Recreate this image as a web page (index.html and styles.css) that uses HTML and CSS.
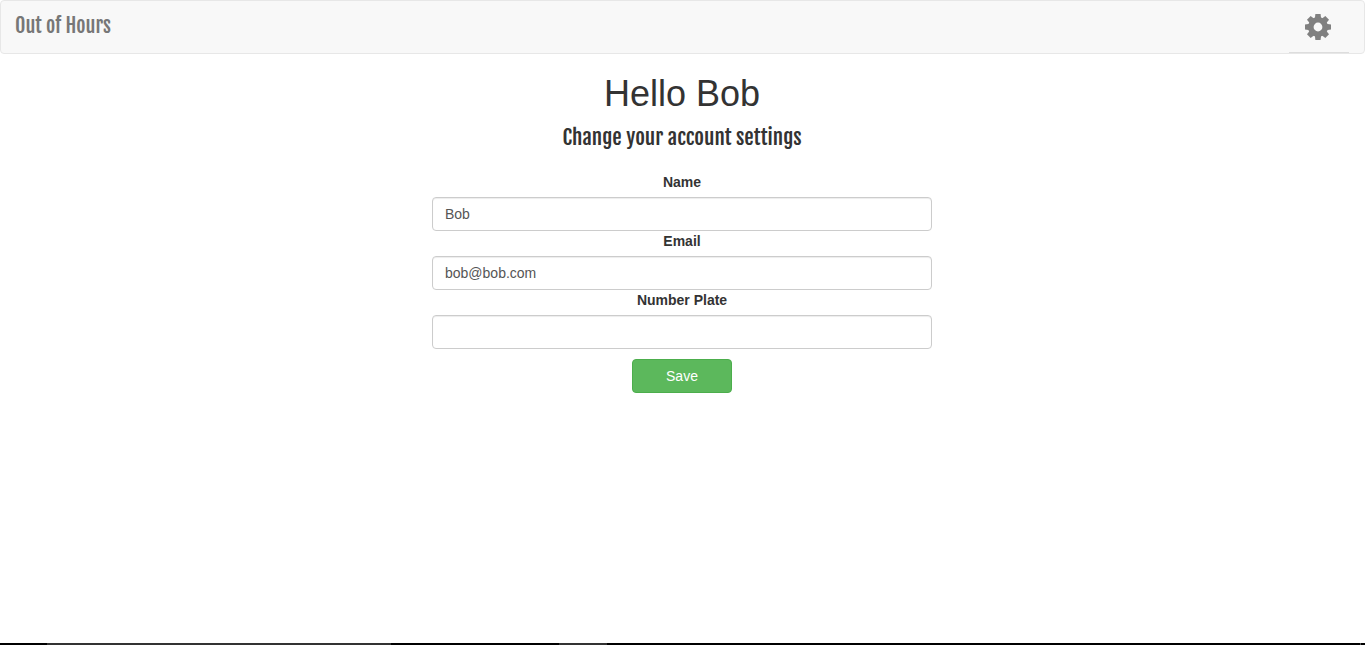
FILE: index.html
```html
<!DOCTYPE html>
<html lang="en">
<head>
<meta charset="utf-8">
<title>Out of Hours</title>
<link rel="stylesheet" href="styles.css">
</head>
<body>
<header class="navbar">
  <a class="brand" href="#">Out of Hours</a>
  <button class="settings" type="button" aria-label="Settings">
    <svg class="cog" viewBox="-13 -13 26 26" aria-hidden="true">
      <defs><path id="tooth" d="M-2.6-13H2.6L3.2-8H-3.2Z"/></defs>
      <g fill="currentColor">
        <path fill-rule="evenodd" d="M0-10A10 10 0 1 1 0 10A10 10 0 1 1 0-10ZM0-4.4A4.4 4.4 0 1 0 0 4.4A4.4 4.4 0 1 0 0-4.4Z"/>
        <use href="#tooth"/>
        <use href="#tooth" transform="rotate(45)"/>
        <use href="#tooth" transform="rotate(90)"/>
        <use href="#tooth" transform="rotate(135)"/>
        <use href="#tooth" transform="rotate(180)"/>
        <use href="#tooth" transform="rotate(225)"/>
        <use href="#tooth" transform="rotate(270)"/>
        <use href="#tooth" transform="rotate(315)"/>
      </g>
    </svg>
  </button>
</header>
<main class="content">
  <h1 class="greeting">Hello Bob</h1>
  <h2 class="subtitle">Change your account settings</h2>
  <form class="account-form">
    <label class="label" for="name">Name</label>
    <input class="field" id="name" type="text" value="Bob">
    <label class="label" for="email">Email</label>
    <input class="field" id="email" type="email" value="bob@bob.com">
    <label class="label" for="plate">Number Plate</label>
    <input class="field" id="plate" type="text">
    <button class="save" type="button">Save</button>
  </form>
</main>
<footer class="taskbar">
  <span class="gap-start"></span>
  <span class="search"></span>
  <span class="gap-middle"></span>
  <span class="active-app"></span>
  <span class="divider"></span>
</footer>
</body>
</html>
```

FILE: styles.css
```css
* {
  box-sizing: border-box;
}

body {
  display: flex;
  flex-direction: column;
  min-height: 100vh;
  margin: 0;
  background: #fff;
  color: #333;
  font: 14px/20px "Liberation Sans", Arial, sans-serif;
}

.navbar {
  display: flex;
  justify-content: space-between;
  padding: 0 15px 0 14px;
  border: 1px solid #e7e7e7;
  border-radius: 4px;
  background: #f8f8f8;
}

.brand {
  padding: 12px 0 14px;
  color: #777;
  font: 20px/26px "Fjalla One", "Liberation Sans Narrow", "Roboto Condensed", "Open Sans Condensed", sans-serif;
  text-decoration: none;
}

.settings {
  width: 60px;
  padding: 0 16px;
  border: 0;
  border-bottom: 1px solid #ddd;
  background: transparent;
  color: #808080;
}

.cog {
  display: block;
  width: 26px;
  height: 26px;
}

.content {
  display: flex;
  flex: 1;
  flex-direction: column;
  align-items: center;
  padding: 20px 16px 20px 15px;
  text-align: center;
}

.greeting {
  margin: 0 0 10px;
  font-size: 36px;
  font-weight: 500;
  line-height: 40px;
}

.subtitle {
  margin: 0 0 22px;
  font: 21px/26px "Fjalla One", "Liberation Sans Narrow", "Roboto Condensed", "Open Sans Condensed", sans-serif;
}

.account-form {
  display: flex;
  flex-direction: column;
  align-items: center;
  width: 100%;
  max-width: 500px;
}

.label {
  margin-bottom: 5px;
  font-weight: 700;
}

.field {
  width: 100%;
  height: 34px;
  padding: 6px 12px;
  border: 1px solid #ccc;
  border-radius: 4px;
  background: #fff;
  box-shadow: inset 0 1px 1px rgba(0, 0, 0, 0.075);
  color: #555;
  font: inherit;
}

.save {
  width: 100px;
  margin-top: 10px;
  padding: 6px 12px;
  border: 1px solid #4cae4c;
  border-radius: 4px;
  background: #5cb85c;
  color: #fff;
  font: inherit;
}

.taskbar {
  display: flex;
  height: 2px;
  background: #000;
}

.gap-start {
  width: 47px;
}

.search {
  width: 344px;
  background: #333;
}

.gap-middle {
  width: 168px;
}

.active-app {
  width: 48px;
  background: #333;
}

.divider {
  width: 1px;
  margin: 0 4px 0 auto;
  background: #555;
}
```
